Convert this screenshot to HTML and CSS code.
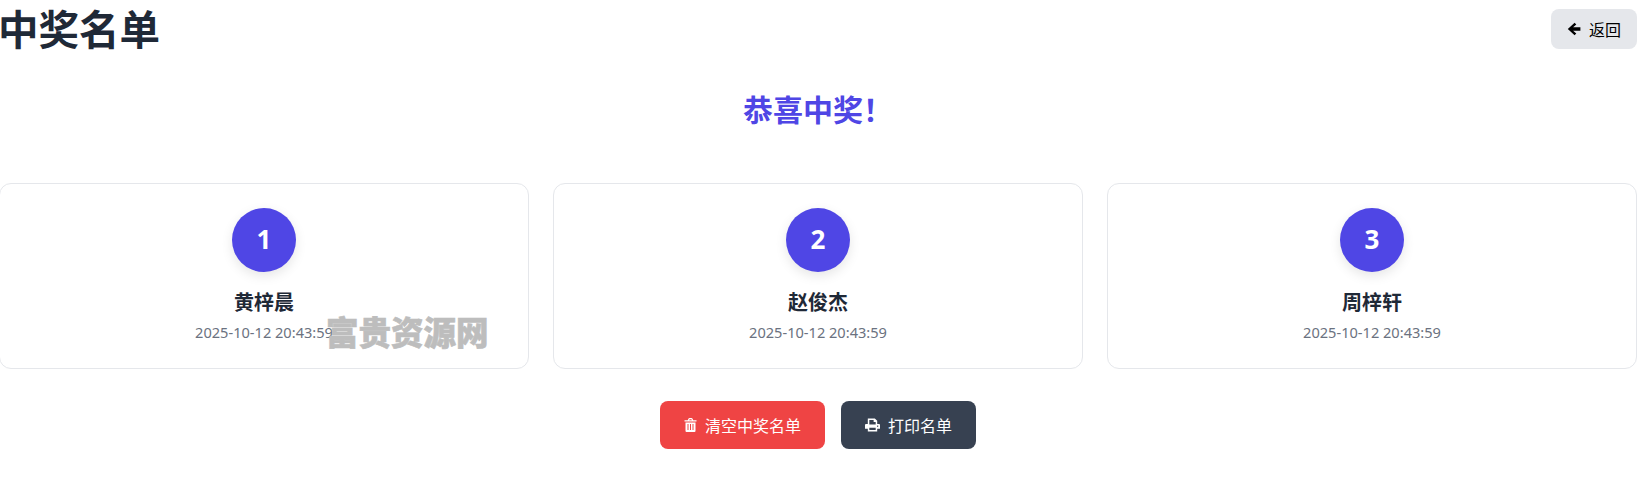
FILE: index.html
```html
<!DOCTYPE html>
<html lang="zh-CN">
<head>
    <meta charset="UTF-8">
    <meta name="viewport" content="width=device-width, initial-scale=1.0">
    <title>中奖名单</title>
    <link rel="stylesheet" href="styles.css">
</head>
<body>
    <div class="page">
        <div class="page-header">
            <h1>中奖名单</h1>
            <a class="back-btn" href="#">
                <svg class="icon" viewBox="0 0 14 14"><path d="M7.6 .8 L.8 7 L7.6 13.2 L9.3 11.5 L6.1 8.7 H13.4 V5.3 H6.1 L9.3 2.5 Z"/></svg>
                返回
            </a>
        </div>

        <h2 class="congrats">恭喜中奖！</h2>

        <!-- Winner cards -->
        <div class="winner-grid">
            <div class="winner-card">
                <div class="rank">1</div>
                <div class="winner-name">黄梓晨</div>
                <div class="winner-time">2025-10-12 20:43:59</div>
                <span class="watermark">富贵资源网</span>
            </div>
            <div class="winner-card">
                <div class="rank">2</div>
                <div class="winner-name">赵俊杰</div>
                <div class="winner-time">2025-10-12 20:43:59</div>
            </div>
            <div class="winner-card">
                <div class="rank">3</div>
                <div class="winner-name">周梓轩</div>
                <div class="winner-time">2025-10-12 20:43:59</div>
            </div>
        </div>

        <div class="actions">
            <button class="btn btn-clear">
                <svg class="icon icon-trash" viewBox="0 0 12 14"><path fill-rule="evenodd" d="M1 4.5 H11 V13 a1 1 0 0 1 -1 1 H2 a1 1 0 0 1 -1 -1 Z M3 6 v6 h1 V6 Z M5.5 6 v6 h1 V6 Z M8 6 v6 h1 V6 Z M0 2.2 H3.2 L4.1 .6 Q4.4 0 5 0 H7 Q7.6 0 7.9 .6 L8.8 2.2 H12 V3.5 H0 Z M4.6 2.2 H7.4 L6.9 1.2 H5.1 Z"/></svg>
                清空中奖名单
            </button>
            <button class="btn btn-print">
                <svg class="icon icon-print" viewBox="0 0 16 14"><path fill-rule="evenodd" d="M3 0 H10.5 L13 2.5 V6 H15 a1 1 0 0 1 1 1 V11 H13 V14 H3 V11 H0 V7 a1 1 0 0 1 1 -1 H3 Z M4.6 1.6 V6.4 H11.4 V3.8 H9.2 V1.6 Z M4.6 10 V12.4 H11.4 V10 Z M13.5 7.5 a.7 .7 0 1 0 .01 0 Z"/></svg>
                打印名单
            </button>
        </div>
    </div>
</body>
</html>
```

FILE: styles.css
```css
* {
    margin: 0;
    padding: 0;
    box-sizing: border-box;
}

body {
    font-family: "Noto Sans", "Noto Sans CJK SC", sans-serif;
    background-color: #fff;
    color: #1f2937;
    overflow: hidden;
}

.page {
    width: 1638px;
    margin-left: -1px;
}

.page-header {
    display: flex;
    justify-content: space-between;
    align-items: flex-start;
    height: 58px;
}

.page-header h1 {
    margin-left: -1px;
    font-size: 40.5px;
    line-height: 60px;
    font-weight: 700;
}

.back-btn {
    display: flex;
    align-items: center;
    gap: 8px;
    height: 40px;
    margin-top: 9px;
    padding: 0 16px;
    background-color: #e5e7eb;
    border-radius: 8px;
    color: #000;
    font-size: 16px;
    text-decoration: none;
}

.icon {
    width: 14px;
    height: 14px;
    fill: currentColor;
}

.icon-trash {
    width: 13px;
}

.icon-print {
    width: 15px;
}

.congrats {
    margin-top: 31px;
    text-align: center;
    font-size: 30px;
    line-height: 42px;
    font-weight: 700;
    color: #4f46e5;
}

.winner-grid {
    display: grid;
    grid-template-columns: repeat(3, 1fr);
    gap: 24px;
    margin-top: 52px;
}

.winner-card {
    position: relative;
    display: flex;
    flex-direction: column;
    align-items: center;
    height: 186px;
    padding-top: 24px;
    border: 1px solid #e5e7eb;
    border-radius: 12px;
    background-color: #fff;
}

.rank {
    display: flex;
    align-items: center;
    justify-content: center;
    width: 64px;
    height: 64px;
    padding-bottom: 2px;
    border-radius: 50%;
    background-color: #4f46e5;
    color: #fff;
    font-size: 26px;
    font-weight: 700;
    box-shadow: 0 4px 12px rgba(0, 0, 0, 0.1);
}

.winner-name {
    margin-top: 16px;
    font-size: 20px;
    line-height: 30px;
    font-weight: 700;
}

.winner-time {
    margin-top: 4px;
    font-size: 14.6px;
    line-height: 21px;
    color: #6b7280;
}

/* site watermark sitting over the first card */
.watermark {
    position: absolute;
    left: 326px;
    top: 133px;
    font-size: 32.5px;
    line-height: 32px;
    font-weight: 900;
    color: #bdbdbd;
    -webkit-text-stroke: 0.6px #bdbdbd;
    white-space: nowrap;
}

.actions {
    display: flex;
    justify-content: center;
    gap: 16px;
    margin-top: 32px;
}

.btn {
    display: flex;
    align-items: center;
    gap: 8px;
    height: 48px;
    padding: 0 24px;
    border: none;
    border-radius: 8px;
    color: #fff;
    font-family: inherit;
    font-size: 16px;
}

.btn-clear {
    background-color: #ef4444;
}

.btn-print {
    background-color: #374151;
}
```
